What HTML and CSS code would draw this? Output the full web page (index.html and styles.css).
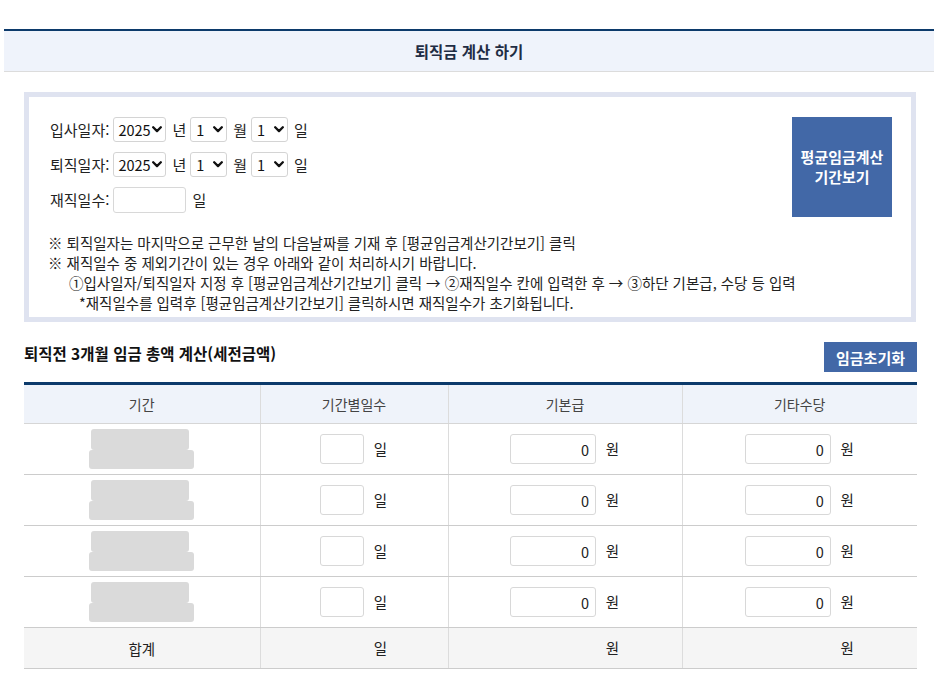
FILE: index.html
```html
<!DOCTYPE html>
<html lang="ko">
<head>
<meta charset="utf-8">
<title>퇴직금 계산 하기</title>
<link rel="stylesheet" href="styles.css">
</head>
<body>
<div class="page">
  <div class="title-bar"><h1 class="title">퇴직금 계산 하기</h1></div>
  <div class="content">
    <div class="info-box">
      <div class="info-top">
        <div class="date-form">
          <div class="form-row">
            <span class="label">입사일자:</span>
            <span class="sel sel-year"><select><option>2025</option></select><svg class="chev" viewBox="0 0 10 7"><path d="M1.2 1.3 L5 5.1 L8.8 1.3"/></svg></span>
            <span class="unit">년</span>
            <span class="sel sel-small"><select><option>1</option></select><svg class="chev" viewBox="0 0 10 7"><path d="M1.2 1.3 L5 5.1 L8.8 1.3"/></svg></span>
            <span class="unit">월</span>
            <span class="sel sel-small"><select><option>1</option></select><svg class="chev" viewBox="0 0 10 7"><path d="M1.2 1.3 L5 5.1 L8.8 1.3"/></svg></span>
            <span class="unit">일</span>
          </div>
          <div class="form-row">
            <span class="label">퇴직일자:</span>
            <span class="sel sel-year"><select><option>2025</option></select><svg class="chev" viewBox="0 0 10 7"><path d="M1.2 1.3 L5 5.1 L8.8 1.3"/></svg></span>
            <span class="unit">년</span>
            <span class="sel sel-small"><select><option>1</option></select><svg class="chev" viewBox="0 0 10 7"><path d="M1.2 1.3 L5 5.1 L8.8 1.3"/></svg></span>
            <span class="unit">월</span>
            <span class="sel sel-small"><select><option>1</option></select><svg class="chev" viewBox="0 0 10 7"><path d="M1.2 1.3 L5 5.1 L8.8 1.3"/></svg></span>
            <span class="unit">일</span>
          </div>
          <div class="form-row form-row-days">
            <span class="label">재직일수:</span>
            <input class="days-input" type="text">
            <span class="unit">일</span>
          </div>
        </div>
        <button class="period-btn" type="button">평균임금계산<br>기간보기</button>
      </div>
      <div class="notes">
        <p>※ 퇴직일자는 마지막으로 근무한 날의 다음날짜를 기재 후 [평균임금계산기간보기] 클릭</p>
        <p>※ 재직일수 중 제외기간이 있는 경우 아래와 같이 처리하시기 바랍니다.</p>
        <p class="indent1">①입사일자/퇴직일자 지정 후 [평균임금계산기간보기] 클릭 → ②재직일수 칸에 입력한 후 → ③하단 기본급, 수당 등 입력</p>
        <p class="indent2">*재직일수를 입력후 [평균임금계산기간보기] 클릭하시면 재직일수가 초기화됩니다.</p>
      </div>
    </div>

    <div class="section-head">
      <h2 class="section-title">퇴직전 3개월 임금 총액 계산(세전금액)</h2>
      <button class="reset-btn" type="button">임금초기화</button>
    </div>

    <table class="wage-table">
      <colgroup>
        <col class="c1"><col class="c2"><col class="c3"><col class="c4">
      </colgroup>
      <thead>
        <tr><th>기간</th><th>기간별일수</th><th>기본급</th><th>기타수당</th></tr>
      </thead>
      <tbody>
        <tr>
          <td><div class="blur"><span class="b1"></span><span class="b2"></span></div></td>
          <td><div class="cell"><input class="in-days" type="text"><span class="u">일</span></div></td>
          <td><div class="cell"><input class="in-money" type="text" value="0"><span class="u">원</span></div></td>
          <td><div class="cell"><input class="in-money" type="text" value="0"><span class="u">원</span></div></td>
        </tr>
        <tr>
          <td><div class="blur"><span class="b1"></span><span class="b2"></span></div></td>
          <td><div class="cell"><input class="in-days" type="text"><span class="u">일</span></div></td>
          <td><div class="cell"><input class="in-money" type="text" value="0"><span class="u">원</span></div></td>
          <td><div class="cell"><input class="in-money" type="text" value="0"><span class="u">원</span></div></td>
        </tr>
        <tr>
          <td><div class="blur"><span class="b1"></span><span class="b2"></span></div></td>
          <td><div class="cell"><input class="in-days" type="text"><span class="u">일</span></div></td>
          <td><div class="cell"><input class="in-money" type="text" value="0"><span class="u">원</span></div></td>
          <td><div class="cell"><input class="in-money" type="text" value="0"><span class="u">원</span></div></td>
        </tr>
        <tr>
          <td><div class="blur"><span class="b1"></span><span class="b2"></span></div></td>
          <td><div class="cell"><input class="in-days" type="text"><span class="u">일</span></div></td>
          <td><div class="cell"><input class="in-money" type="text" value="0"><span class="u">원</span></div></td>
          <td><div class="cell"><input class="in-money" type="text" value="0"><span class="u">원</span></div></td>
        </tr>
      </tbody>
      <tfoot>
        <tr>
          <td>합계</td>
          <td><div class="cell"><span class="total total-days"></span><span class="u">일</span></div></td>
          <td><div class="cell"><span class="total total-money"></span><span class="u">원</span></div></td>
          <td><div class="cell"><span class="total total-money"></span><span class="u">원</span></div></td>
        </tr>
      </tfoot>
    </table>
  </div>
</div>
</body>
</html>
```

FILE: styles.css
```css
* { box-sizing: border-box; }

body {
  margin: 0;
  font-family: "Noto Sans CJK KR", "Noto Sans", sans-serif;
  font-size: 15px;
  color: #222;
  background: #fff;
}

.page {
  padding-top: 29px;
  padding-left: 4px;
}

.title-bar {
  border-top: 2px solid #0c3a6b;
  border-bottom: 1px solid #dcdcdc;
  background: #eff3fb;
  height: 43px;
  display: flex;
  align-items: center;
  justify-content: center;
}

.title {
  margin: 0;
  font-size: 15.5px;
  font-weight: 700;
  color: #1f2d44;
  line-height: 20px;
}

.content {
  padding: 20px 17px 0 20px;
}

.info-box {
  border: 5px solid #dfe3f0;
  padding: 20px 19px 4px 21px;
  margin-right: 1px;
}

.info-top {
  display: flex;
  justify-content: space-between;
  align-items: flex-start;
}

.date-form {
  display: flex;
  flex-direction: column;
  gap: 10px;
}

.form-row {
  display: flex;
  align-items: center;
  height: 25px;
  line-height: 20px;
}

.form-row-days { height: 26px; }

.label { margin-right: 4px; }

.unit { margin: 0 4px 0 6px; }

.sel {
  position: relative;
  display: inline-block;
  height: 25px;
}

.sel select {
  appearance: none;
  -webkit-appearance: none;
  height: 25px;
  border: 1px solid #d4d4d4;
  border-radius: 3px;
  background: #fff;
  padding: 0 0 0 4px;
  font-family: "Noto Sans CJK KR", "Noto Sans", sans-serif;
  font-size: 14.5px;
  color: #111;
  line-height: 23px;
  display: block;
}

.sel-year select { width: 53px; }
.sel-small select { width: 37px; padding-left: 5px; }

.chev {
  position: absolute;
  right: 4px;
  top: 9px;
  width: 10px;
  height: 7px;
  pointer-events: none;
}

.chev path {
  fill: none;
  stroke: #111;
  stroke-width: 2.3;
  stroke-linecap: round;
  stroke-linejoin: round;
}

.days-input {
  width: 73px;
  height: 26px;
  border: 1px solid #d8d8d8;
  border-radius: 3px;
  background: #fff;
}

.period-btn {
  width: 100px;
  height: 100px;
  border: none;
  background: #4268a7;
  color: #fff;
  font-family: "Noto Sans CJK KR", "Noto Sans", sans-serif;
  font-size: 15px;
  font-weight: 700;
  line-height: 20px;
  padding: 0;
}

.notes {
  margin-top: 16px;
  margin-left: -2px;
  font-size: 14.5px;
  line-height: 20px;
  color: #222;
}

.notes p { margin: 0; white-space: nowrap; }
.notes .indent1 { padding-left: 21px; }
.notes .indent2 { padding-left: 31px; }

.section-head {
  display: flex;
  justify-content: space-between;
  align-items: flex-start;
  margin-top: 20px;
}

.section-title {
  margin: 0;
  font-size: 15.5px;
  font-weight: 700;
  line-height: 22px;
  color: #111;
}

.reset-btn {
  width: 93px;
  height: 30px;
  border: none;
  background: #4268a7;
  color: #fff;
  font-family: "Noto Sans CJK KR", "Noto Sans", sans-serif;
  font-size: 15px;
  font-weight: 700;
  padding: 0;
}

.wage-table {
  margin-top: 10px;
  width: 893px;
  border-collapse: collapse;
  table-layout: fixed;
  border-top: 3px solid #0c3a6b;
}

.c1 { width: 236px; }
.c2 { width: 188px; }
.c3 { width: 234px; }
.c4 { width: 235px; }

.wage-table th {
  height: 40px;
  background: #eff3fa;
  font-weight: 400;
  color: #444;
  font-size: 14px;
  border-bottom: 1px solid #d6d6d6;
  border-left: 1px solid #dcdcdc;
  padding: 0;
}

.wage-table td {
  height: 51px;
  border-bottom: 1px solid #cccccc;
  border-left: 1px solid #dcdcdc;
  padding: 0;
  text-align: center;
  vertical-align: middle;
  font-size: 14.5px;
}

.wage-table th:first-child,
.wage-table td:first-child { border-left: none; }

.wage-table tfoot td {
  height: 41px;
  background: #f5f5f5;
  border-top: 1px solid #0c3a6b;
  border-bottom: 1px solid #cccccc;
  color: #222;
}

.cell {
  display: flex;
  align-items: center;
  justify-content: center;
  gap: 9px;
}

.u { width: 15px; line-height: 20px; }

.in-days,
.in-money {
  height: 30px;
  border: 1px solid #d8d8d8;
  border-radius: 3px;
  background: #fff;
  font-family: "Noto Sans CJK KR", "Noto Sans", sans-serif;
  font-size: 14.5px;
  color: #222;
  text-align: right;
  padding: 0 6px 0 4px;
}

.in-days { width: 44px; }
.in-money { width: 86px; }

.total { display: inline-block; height: 20px; }
.total-days { width: 44px; }
.total-money { width: 86px; }

.blur {
  display: flex;
  flex-direction: column;
  align-items: center;
}

.blur span {
  display: block;
  background: #dadada;
  border-radius: 3px;
}

.blur .b1 { width: 98px; height: 21px; margin-left: -3px; }
.blur .b2 { width: 105px; height: 19px; }
```
